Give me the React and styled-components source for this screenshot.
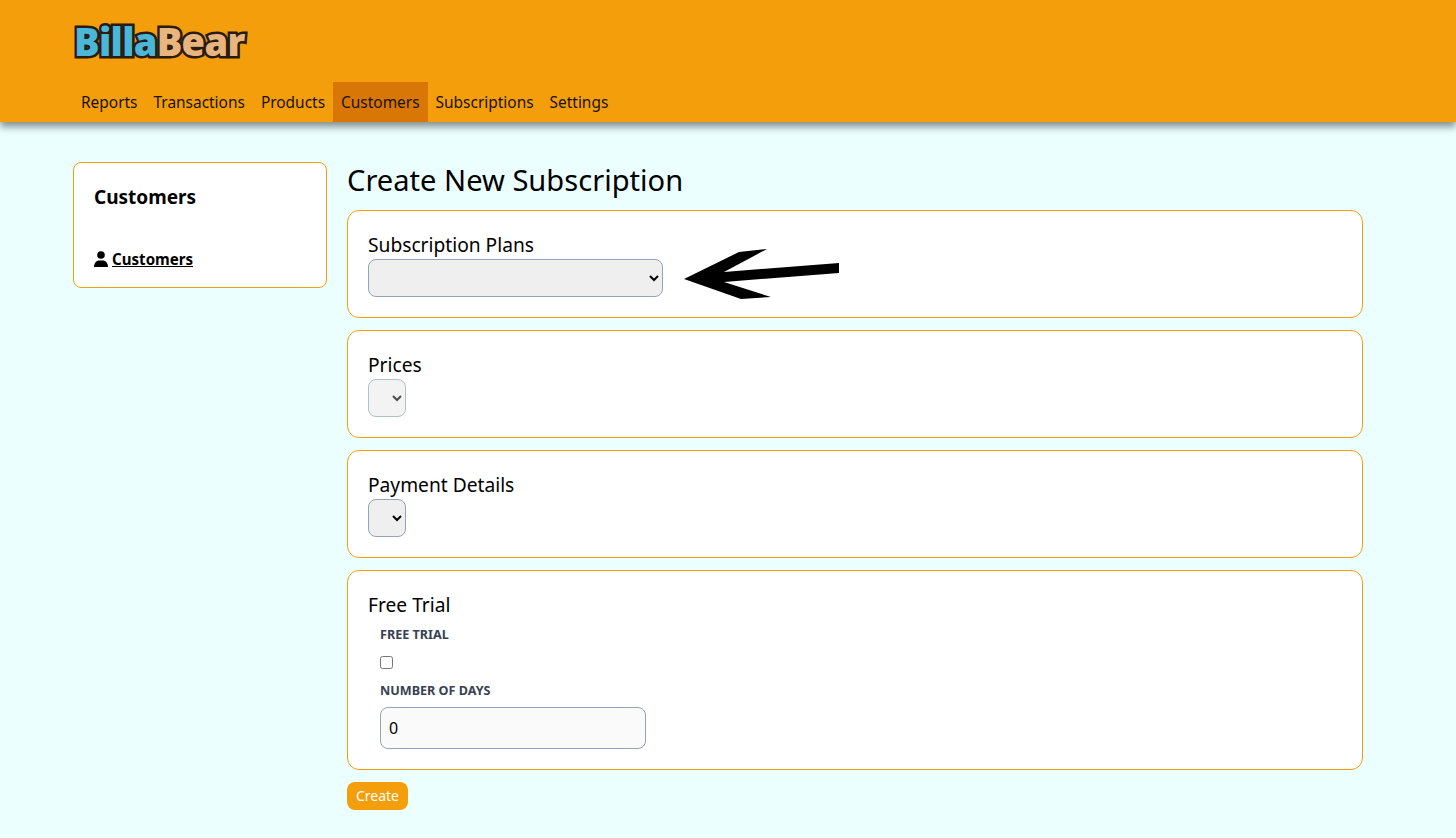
import React from "react";
import styled, { createGlobalStyle } from "styled-components";

const Global = createGlobalStyle`
  html, body { margin: 0; padding: 0; }
  body { background: #ebffff; font-family: "Noto Sans", "Open Sans", sans-serif; color: #000; }
  * { box-sizing: border-box; }
`;

const Header = styled.header`
  height: 122px;
  background: #f59e0b;
  padding: 0 73px;
  box-shadow: 0 5px 7px rgba(40, 40, 40, 0.5);
  display: flex;
  flex-direction: column;
  justify-content: space-between;
`;

const Logo = styled.div`
  margin-top: 19px;
  height: 44px;
  display: flex;
  align-items: center;
  padding-left: 1px;
  font-family: "Open Sans", sans-serif;
  font-weight: 800;
  font-size: 38px;
  letter-spacing: -0.7px;
  line-height: 1;
`;

const LogoPart = styled.span`
  color: ${(p) => p.$color};
  -webkit-text-stroke: 5px #2a1c12;
  paint-order: stroke fill;
`;

const Nav = styled.nav`
  display: flex;
  height: 40px;
`;

const NavItem = styled.a`
  display: flex;
  align-items: center;
  padding: 0 8px;
  font-size: 15.45px;
  color: #1a1204;
  background: ${(p) => (p.$active ? "#d97706" : "transparent")};
`;

const Page = styled.div`
  display: flex;
  align-items: flex-start;
  gap: 20px;
  padding: 40px 93px 0 73px;
`;

const Sidebar = styled.aside`
  width: 254px;
  height: 126px;
  flex: none;
  background: #fff;
  border: 1px solid #f59e0b;
  border-radius: 8px;
  padding: 20px;
`;

const SideTitle = styled.h2`
  margin: 0;
  font-size: 19px;
  line-height: 28px;
  font-weight: 700;
`;

const SideLink = styled.a`
  display: flex;
  align-items: center;
  gap: 4px;
  margin-top: 38px;
  font-size: 15.1px;
  line-height: 20px;
  font-weight: 700;
  color: #000;
  text-decoration: underline;
`;

const Main = styled.main`
  flex: 1;
  min-width: 0;
`;

const Title = styled.h1`
  margin: 0 0 11px;
  font-size: 29.1px;
  line-height: 37px;
  font-weight: 400;
`;

const Card = styled.section`
  background: #fff;
  border: 1px solid #f59e0b;
  border-radius: 12px;
  padding: 20px;
  margin-bottom: 12px;
  height: ${(p) => p.$height}px;
`;

const CardLabel = styled.div`
  font-size: 19.2px;
  line-height: 28px;
`;

const SelectRow = styled.div`
  display: flex;
  align-items: flex-start;
`;

const Select = styled.select`
  display: block;
  width: ${(p) => p.$width}px;
  height: 38px;
  background: #efefef;
  border: 1px solid #94a3b8;
  border-radius: 8px;
  font-size: 16px;
  color: #000;
  opacity: ${(p) => (p.disabled ? 0.7 : 1)};
`;

const Arrow = styled.svg`
  display: block;
  flex: none;
  margin-left: 21px;
  margin-top: -10px;
`;

const Field = styled.div`
  padding: 0 12px;
`;

const FieldLabel = styled.label`
  display: block;
  font-size: 12.6px;
  line-height: 16px;
  font-weight: 700;
  text-transform: uppercase;
  color: #374151;
  margin-top: ${(p) => p.$top}px;
`;

const Check = styled.input`
  display: block;
  width: 13px;
  height: 13px;
  margin: 13px 0 0;
`;

const NumberInput = styled.input`
  display: block;
  width: 266px;
  height: 42px;
  margin-top: 8px;
  padding: 0 8px;
  background: #fafafa;
  border: 1px solid #94a3b8;
  border-radius: 8px;
  font-family: inherit;
  font-size: 16px;
  color: #000;
`;

const CreateButton = styled.button`
  display: block;
  height: 28px;
  width: 61px;
  padding: 0 0 2px;
  background: #f59e0b;
  color: #fff;
  border: 0;
  border-radius: 8px;
  font-family: inherit;
  font-size: 14px;
`;

const navItems = ["Reports", "Transactions", "Products", "Customers", "Subscriptions", "Settings"];

export default function App() {
  return (
    <>
      <Global />
      <Header>
        <Logo>
          <LogoPart $color="#4ab6d8">Billa</LogoPart>
          <LogoPart $color="#e8b57f">Bear</LogoPart>
        </Logo>
        <Nav>
          {navItems.map((n) => (
            <NavItem key={n} $active={n === "Customers"}>{n}</NavItem>
          ))}
        </Nav>
      </Header>
      <Page>
        <Sidebar>
          <SideTitle>Customers</SideTitle>
          <SideLink>
            <svg width="14" height="16" viewBox="0 0 14 16" aria-hidden="true">
              <circle cx="7" cy="4" r="3.8" fill="#000" />
              <path d="M0 16c0-4 2.500-6.500 5-6.500h4c2.500 0 5 2.500 5 6.500z" fill="#000" />
            </svg>
            Customers
          </SideLink>
        </Sidebar>
        <Main>
          <Title>Create New Subscription</Title>
          <Card $height={108}>
            <CardLabel>Subscription Plans</CardLabel>
            <SelectRow>
              <Select $width={295} />
              <Arrow width="156" height="51" viewBox="0 0 156 51" aria-hidden="true">
                <path d="M0 30 L55 3 L83 0 L40 23 L155 14 L155 24 L40 33 L87 48 L57 50 Z" fill="#000" />
              </Arrow>
            </SelectRow>
          </Card>
          <Card $height={108}>
            <CardLabel>Prices</CardLabel>
            <Select $width={38} disabled />
          </Card>
          <Card $height={108}>
            <CardLabel>Payment Details</CardLabel>
            <Select $width={38} />
          </Card>
          <Card $height={200}>
            <CardLabel>Free Trial</CardLabel>
            <Field>
              <FieldLabel $top={8}>Free Trial</FieldLabel>
              <Check type="checkbox" />
              <FieldLabel $top={14}>Number of days</FieldLabel>
              <NumberInput type="text" defaultValue="0" />
            </Field>
          </Card>
          <CreateButton>Create</CreateButton>
        </Main>
      </Page>
    </>
  );
}
